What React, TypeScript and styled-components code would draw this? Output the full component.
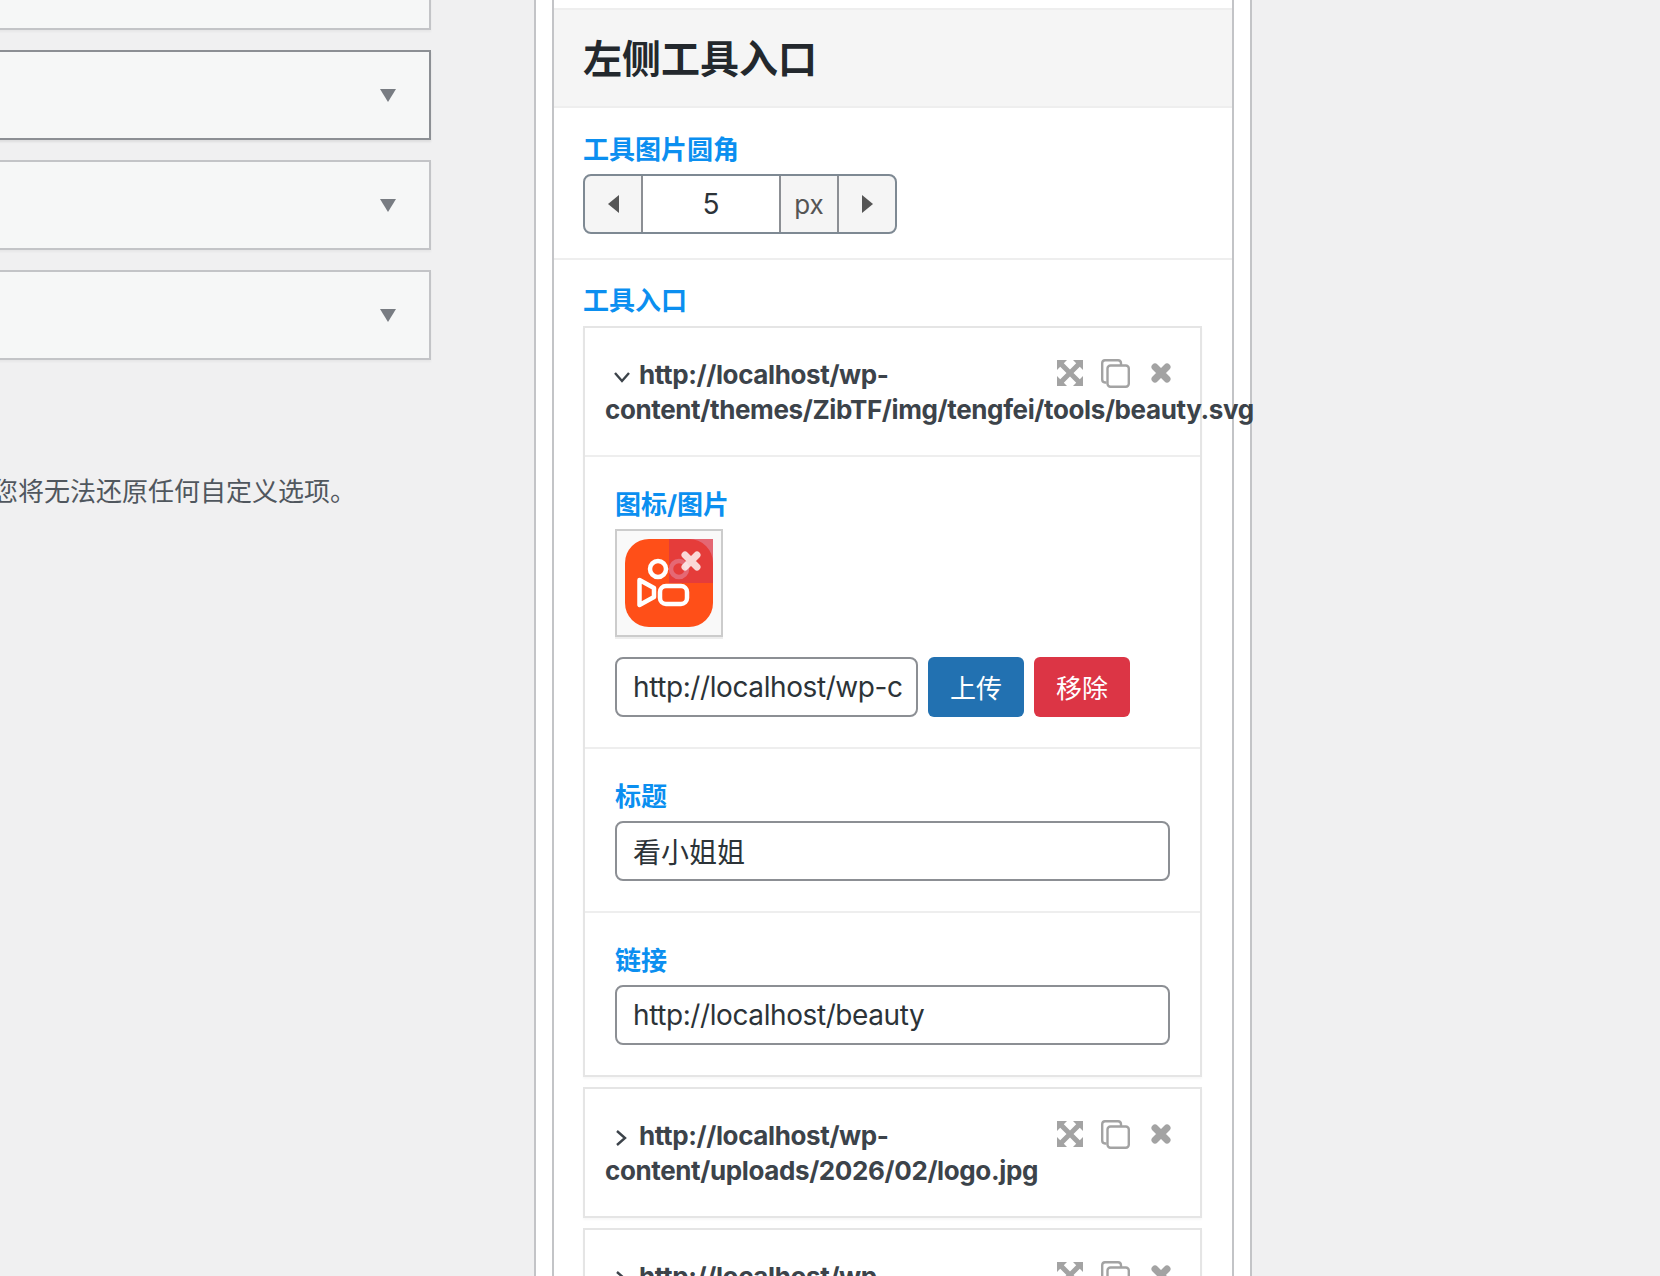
import React from "react";
import styled, { createGlobalStyle } from "styled-components";

const Global = createGlobalStyle`
  html, body { margin: 0; padding: 0; background: #f0f0f1; overflow: hidden; }
  * { box-sizing: border-box; }
  body { font-family: Inter, "Noto Sans CJK SC", sans-serif; }
`;

const Page = styled.div`
  display: flex;
  width: 1660px;
  height: 1276px;
  overflow: hidden;
  background: #f0f0f1;
`;

const LeftColumn = styled.div`
  width: 534px;
  flex: none;
  display: flex;
  flex-direction: column;
  gap: 20px;
  margin-top: -60px;
`;

const SelectCard = styled.div<{ $active?: boolean }>`
  width: 451px;
  height: 90px;
  margin-left: -20px;
  flex: none;
  display: flex;
  align-items: center;
  justify-content: flex-end;
  padding: 1px 33px 0 0;
  background: #f6f7f7;
  border: 2px solid ${(p) => (p.$active ? "#8c8f94" : "#c3c4c7")};
  box-shadow: 0 2px 2px rgba(0, 0, 0, ${(p) => (p.$active ? 0.08 : 0.04)});
`;

const Caret = styled.span`
  width: 0;
  height: 0;
  border-left: 8px solid transparent;
  border-right: 8px solid transparent;
  border-top: 13px solid #787c82;
`;

const Note = styled.p`
  margin: 96px 0 0 -8px;
  font-size: 26px;
  line-height: 32px;
  color: #50575e;
  white-space: nowrap;
`;

const OuterPanel = styled.div`
  width: 718px;
  height: 1276px;
  flex: none;
  padding: 0 16px;
  background: #fff;
  border-left: 2px solid #c3c4c7;
  border-right: 2px solid #c3c4c7;
`;

const InnerPanel = styled.div`
  width: 682px;
  min-height: 1276px;
  padding-top: 8px;
  background: #fff;
  border-left: 2px solid #c3c4c7;
  border-right: 2px solid #c3c4c7;
`;

const SectionTitle = styled.h3`
  margin: 0;
  height: 100px;
  padding: 0 29px 4px;
  display: flex;
  align-items: center;
  font-size: 39px;
  font-weight: 700;
  color: #23282d;
  background: #f5f5f5;
  border-top: 2px solid #eee;
  border-bottom: 2px solid #eee;
`;

const Section = styled.div<{ $top: number; $bottom: number; $rule?: boolean }>`
  padding: ${(p) => p.$top}px 29px ${(p) => p.$bottom}px;
  border-bottom: ${(p) => (p.$rule ? "2px solid #eee" : "none")};
`;

const FieldLabel = styled.div<{ $gap?: number }>`
  font-size: 26px;
  line-height: 32px;
  font-weight: 700;
  color: #0b8ff0;
  margin-bottom: ${(p) => p.$gap ?? 8}px;
`;

const Spinner = styled.div`
  width: 314px;
  height: 60px;
  display: flex;
  border: 2px solid #7e8993;
  border-radius: 8px;
  overflow: hidden;
  background: #f5f5f5;
`;

const SpinButton = styled.span`
  width: 56px;
  flex: none;
  display: flex;
  align-items: center;
  justify-content: center;
`;

const SpinArrow = styled.span<{ $dir: "left" | "right" }>`
  width: 0;
  height: 0;
  border-top: 9px solid transparent;
  border-bottom: 9px solid transparent;
  ${(p) =>
    p.$dir === "left"
      ? "border-right: 11px solid #555;"
      : "border-left: 11px solid #555;"}
`;

const SpinValue = styled.span`
  width: 140px;
  flex: none;
  display: flex;
  align-items: center;
  justify-content: center;
  background: #fff;
  border-left: 2px solid #8c8f94;
  border-right: 2px solid #8c8f94;
  font-size: 28px;
  color: #2c3338;
`;

const SpinUnit = styled.span`
  width: 58px;
  flex: none;
  display: flex;
  align-items: center;
  justify-content: center;
  border-right: 2px solid #8c8f94;
  font-size: 26px;
  color: #555;
`;

const Group = styled.div`
  width: 619px;
  margin-bottom: 10px;
  background: #fff;
  border: 2px solid #e5e5e5;
  box-shadow: 0 2px 2px rgba(0, 0, 0, 0.03);
`;

const Heading = styled.div`
  position: relative;
  padding: 29px 20px 28px;
  font-size: 26px;
  line-height: 35px;
  font-weight: 700;
  letter-spacing: -0.38px;
  color: #3c434a;
`;

const Chevron = styled.svg`
  display: inline-block;
  width: 34px;
  height: 18px;
  vertical-align: -2px;
`;

const Actions = styled.div`
  position: absolute;
  top: 29px;
  right: 29px;
  height: 32px;
  display: flex;
  align-items: center;
`;

const ExpandIcon = styled.svg`
  width: 26px;
  height: 26px;
  margin-right: 18px;
`;

const CloneIcon = styled.svg`
  width: 29px;
  height: 29px;
  margin-right: 21px;
`;

const CrossIcon = styled.svg<{ $size: number }>`
  width: ${(p) => p.$size}px;
  height: ${(p) => p.$size}px;
`;

const Row = styled.div`
  padding: 32px 30px 30px;
  border-top: 2px solid #eee;
`;

const Thumb = styled.div`
  position: relative;
  width: 108px;
  height: 108px;
  padding: 8px;
  background: #f9f9f9;
  border: 2px solid #ccc;
  box-shadow: 0 2px 0 rgba(0, 0, 0, 0.07);
`;

const ThumbRemove = styled.span`
  position: absolute;
  top: 8px;
  right: 8px;
  width: 44px;
  height: 44px;
  display: flex;
  align-items: center;
  justify-content: center;
  background: rgba(220, 53, 69, 0.75);
`;

const UploadRow = styled.div`
  display: flex;
  gap: 10px;
  margin-top: 20px;
`;

const TextInput = styled.div<{ $narrow?: boolean; $latin?: boolean }>`
  width: ${(p) => (p.$narrow ? "303px" : "100%")};
  height: 60px;
  padding: 0 16px;
  display: flex;
  align-items: center;
  white-space: nowrap;
  background: #fff;
  border: 2px solid #8c8f94;
  border-radius: 8px;
  font-size: 28px;
  letter-spacing: ${(p) => (p.$latin ? "-0.41px" : "0")};
  color: #2c3338;
`;

const ActionButton = styled.span<{ $bg: string }>`
  width: 96px;
  height: 60px;
  flex: none;
  display: flex;
  align-items: center;
  justify-content: center;
  padding-bottom: 2px;
  border-radius: 6px;
  background: ${(p) => p.$bg};
  color: #fff;
  font-size: 26px;
`;

const AppIcon = () => (
  <svg width="88" height="88" viewBox="0 0 88 88" style={{ display: "block" }}>
    <rect width="88" height="88" rx="24" fill="#ff4f18" />
    <g fill="none" stroke="#fff" strokeWidth="4.5" strokeLinejoin="round">
      <circle cx="33" cy="30" r="8" />
      <circle cx="54" cy="30" r="8" />
      <rect x="35" y="47" width="27" height="18" rx="6" />
      <path d="M14.5 41 L29 49 V58 L14.5 66 Z" />
    </g>
  </svg>
);

const Cross = ({ size, color }: { size: number; color: string }) => (
  <CrossIcon $size={size} viewBox="0 0 20 20" fill="none" stroke={color} strokeWidth="7" strokeLinecap="round">
    <path d="M4 4 L16 16 M16 4 L4 16" />
  </CrossIcon>
);

const Tools = () => (
  <Actions>
    <ExpandIcon viewBox="0 0 26 26" fill="#a3a3a3">
      <path d="M0 0 H10 L6.8 3.2 L13 9.5 L19.2 3.2 L16 0 H26 V10 L22.8 6.8 L16.5 13 L22.8 19.2 L26 16 V26 H16 L19.2 22.8 L13 16.5 L6.8 22.8 L10 26 H0 V16 L3.2 19.2 L9.5 13 L3.2 6.8 L0 10 Z" />
    </ExpandIcon>
    <CloneIcon viewBox="0 0 29 29" fill="none" stroke="#a3a3a3" strokeWidth="2.4">
      <path d="M5.5 23.5 H4 A3 3 0 0 1 1.2 20.5 V4 A3 3 0 0 1 4 1.2 H17 A3 3 0 0 1 20 4 V6" />
      <rect x="6.5" y="6.5" width="21.3" height="21.3" rx="3" />
    </CloneIcon>
    <Cross size={20} color="#a3a3a3" />
  </Actions>
);

const Down = () => (
  <Chevron viewBox="0 0 34 18" fill="none" stroke="#3c434a" strokeWidth="2.4">
    <path d="M10 5 L17 13 L24 5" />
  </Chevron>
);

const Right = () => (
  <Chevron viewBox="0 0 34 18" fill="none" stroke="#3c434a" strokeWidth="2.4">
    <path d="M12 2 L20 9 L12 16" />
  </Chevron>
);

export default function App() {
  return (
    <Page>
      <Global />
      <LeftColumn>
        <SelectCard />
        <SelectCard $active><Caret /></SelectCard>
        <SelectCard><Caret /></SelectCard>
        <SelectCard><Caret /></SelectCard>
        <Note>您将无法还原任何自定义选项。</Note>
      </LeftColumn>
      <OuterPanel>
        <InnerPanel>
          <SectionTitle>左侧工具入口</SectionTitle>
          <Section $top={26} $bottom={24} $rule>
            <FieldLabel>工具图片圆角</FieldLabel>
            <Spinner>
              <SpinButton><SpinArrow $dir="left" /></SpinButton>
              <SpinValue>5</SpinValue>
              <SpinUnit>px</SpinUnit>
              <SpinButton><SpinArrow $dir="right" /></SpinButton>
            </Spinner>
          </Section>
          <Section $top={25} $bottom={0}>
            <FieldLabel $gap={9}>工具入口</FieldLabel>
            <Group>
              <Heading>
                <Down />http://localhost/wp-content/themes/ZibTF/img/tengfei/tools/beauty.svg
                <Tools />
              </Heading>
              <Row>
                <FieldLabel>图标/图片</FieldLabel>
                <Thumb>
                  <AppIcon />
                  <ThumbRemove><Cross size={20} color="rgba(255,255,255,0.8)" /></ThumbRemove>
                </Thumb>
                <UploadRow>
                  <TextInput $narrow $latin>http://localhost/wp-c</TextInput>
                  <ActionButton $bg="#2271b1">上传</ActionButton>
                  <ActionButton $bg="#dc3545">移除</ActionButton>
                </UploadRow>
              </Row>
              <Row>
                <FieldLabel>标题</FieldLabel>
                <TextInput>看小姐姐</TextInput>
              </Row>
              <Row>
                <FieldLabel>链接</FieldLabel>
                <TextInput $latin>http://localhost/beauty</TextInput>
              </Row>
            </Group>
            <Group>
              <Heading>
                <Right />http://localhost/wp-content/uploads/2026/02/logo.jpg
                <Tools />
              </Heading>
            </Group>
            <Group>
              <Heading>
                <Right />http://localhost/wp-content/uploads/2026/02/logo.jpg
                <Tools />
              </Heading>
            </Group>
          </Section>
        </InnerPanel>
      </OuterPanel>
    </Page>
  );
}
